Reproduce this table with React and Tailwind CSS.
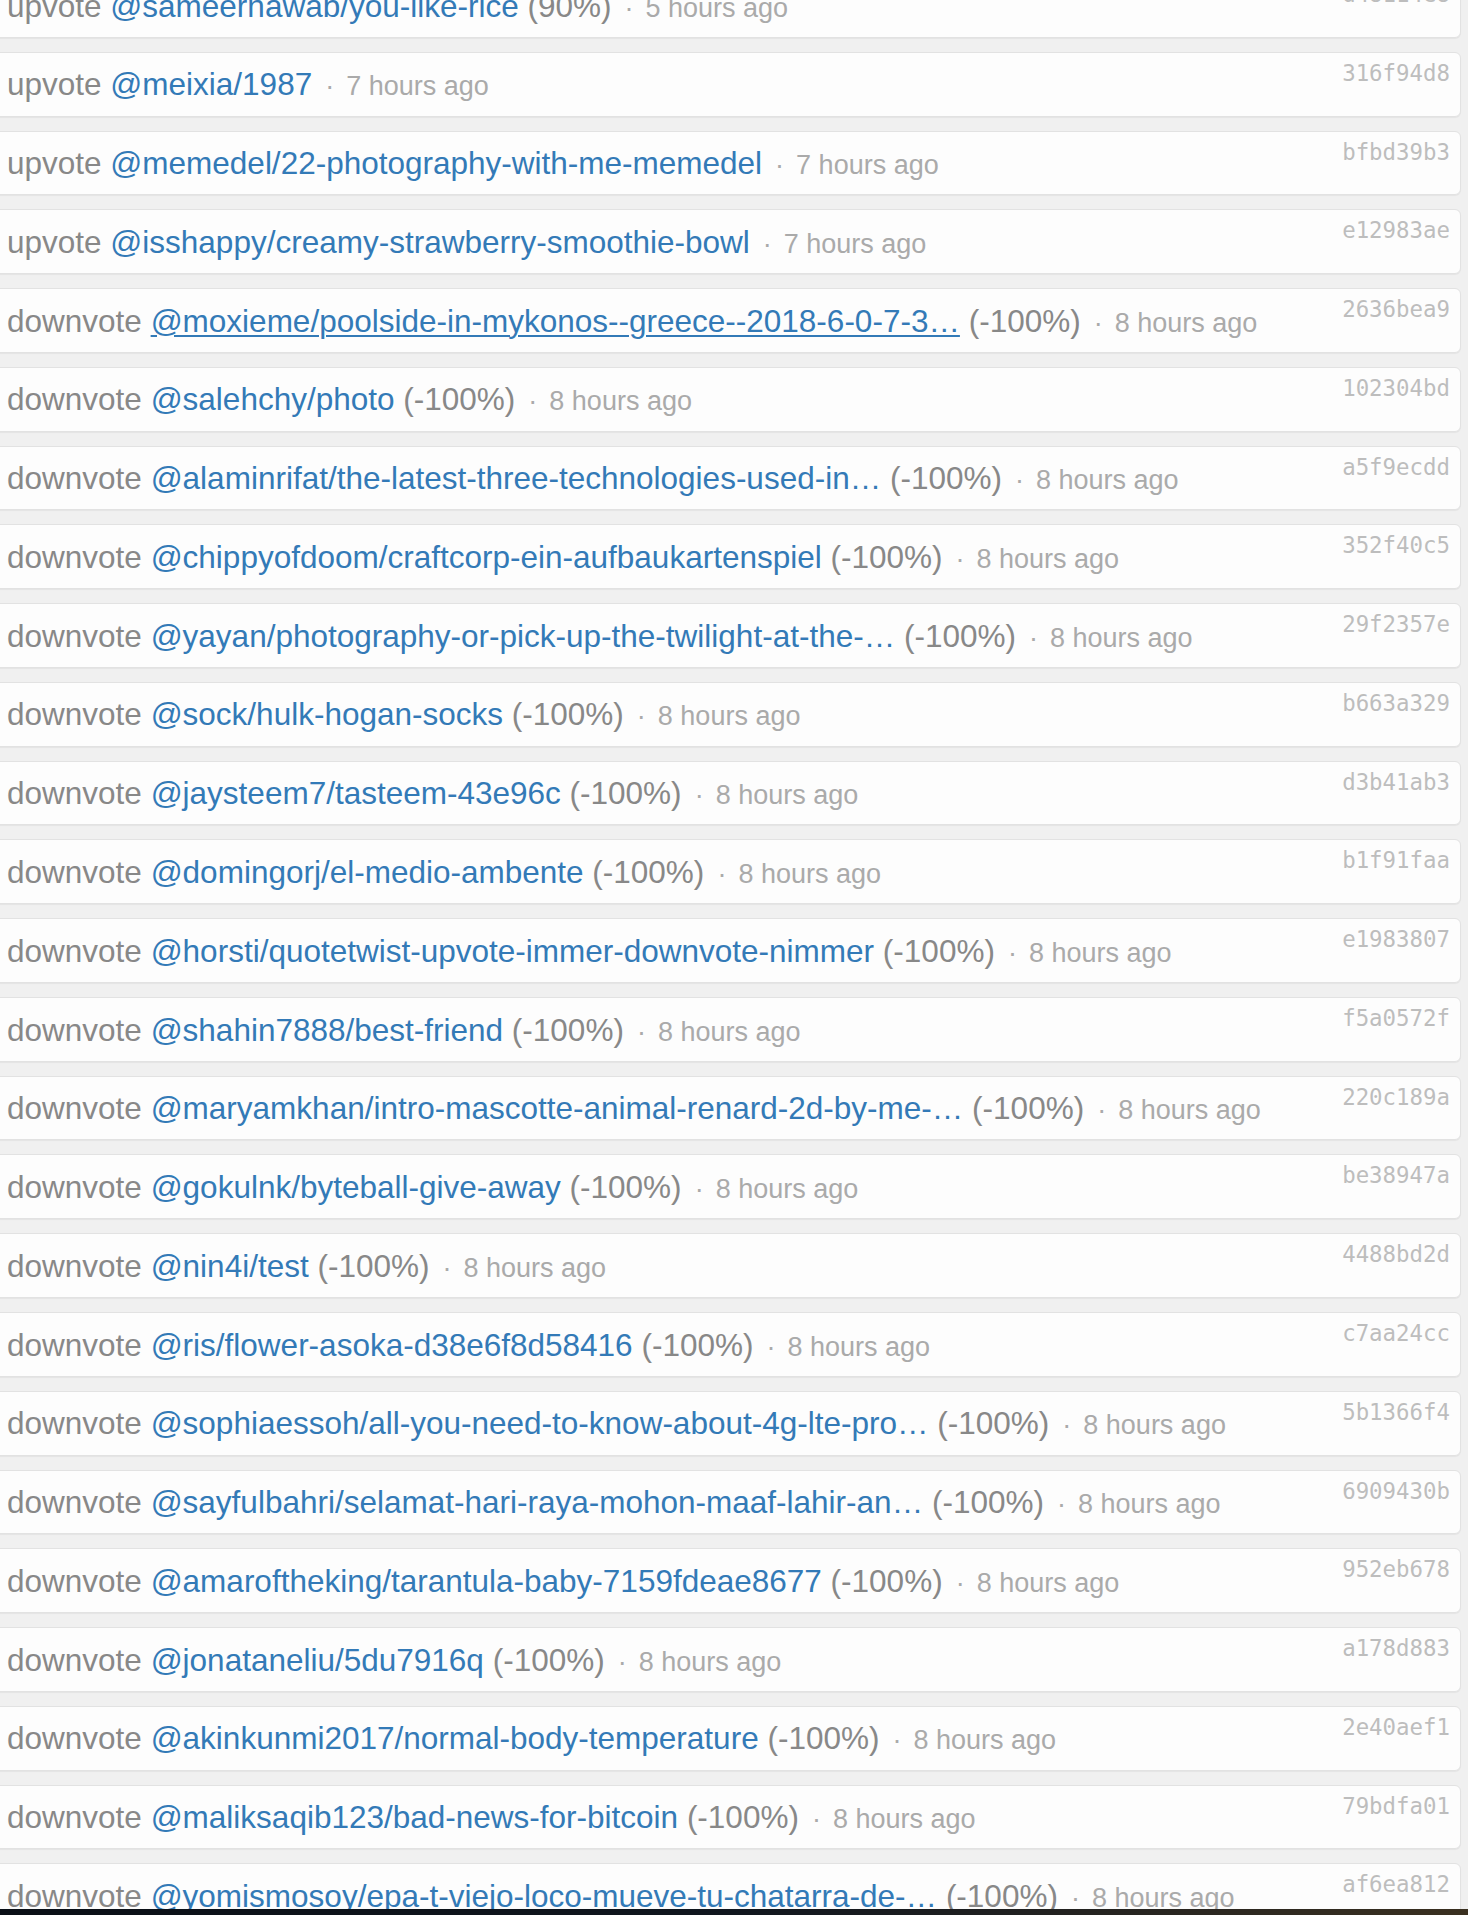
import React from "react";

const rows = [
  ["upvote", "@sameernawab/you-like-rice", "(90%)", "5 hours ago", "d48114e8"],
  ["upvote", "@meixia/1987", null, "7 hours ago", "316f94d8"],
  ["upvote", "@memedel/22-photography-with-me-memedel", null, "7 hours ago", "bfbd39b3"],
  ["upvote", "@isshappy/creamy-strawberry-smoothie-bowl", null, "7 hours ago", "e12983ae"],
  ["downvote", "@moxieme/poolside-in-mykonos--greece--2018-6-0-7-3\u2026", "(-100%)", "8 hours ago", "2636bea9", true],
  ["downvote", "@salehchy/photo", "(-100%)", "8 hours ago", "102304bd"],
  ["downvote", "@alaminrifat/the-latest-three-technologies-used-in\u2026", "(-100%)", "8 hours ago", "a5f9ecdd"],
  ["downvote", "@chippyofdoom/craftcorp-ein-aufbaukartenspiel", "(-100%)", "8 hours ago", "352f40c5"],
  ["downvote", "@yayan/photography-or-pick-up-the-twilight-at-the-\u2026", "(-100%)", "8 hours ago", "29f2357e"],
  ["downvote", "@sock/hulk-hogan-socks", "(-100%)", "8 hours ago", "b663a329"],
  ["downvote", "@jaysteem7/tasteem-43e96c", "(-100%)", "8 hours ago", "d3b41ab3"],
  ["downvote", "@domingorj/el-medio-ambente", "(-100%)", "8 hours ago", "b1f91faa"],
  ["downvote", "@horsti/quotetwist-upvote-immer-downvote-nimmer", "(-100%)", "8 hours ago", "e1983807"],
  ["downvote", "@shahin7888/best-friend", "(-100%)", "8 hours ago", "f5a0572f"],
  ["downvote", "@maryamkhan/intro-mascotte-animal-renard-2d-by-me-\u2026", "(-100%)", "8 hours ago", "220c189a"],
  ["downvote", "@gokulnk/byteball-give-away", "(-100%)", "8 hours ago", "be38947a"],
  ["downvote", "@nin4i/test", "(-100%)", "8 hours ago", "4488bd2d"],
  ["downvote", "@ris/flower-asoka-d38e6f8d58416", "(-100%)", "8 hours ago", "c7aa24cc"],
  ["downvote", "@sophiaessoh/all-you-need-to-know-about-4g-lte-pro\u2026", "(-100%)", "8 hours ago", "5b1366f4"],
  ["downvote", "@sayfulbahri/selamat-hari-raya-mohon-maaf-lahir-an\u2026", "(-100%)", "8 hours ago", "6909430b"],
  ["downvote", "@amaroftheking/tarantula-baby-7159fdeae8677", "(-100%)", "8 hours ago", "952eb678"],
  ["downvote", "@jonataneliu/5du7916q", "(-100%)", "8 hours ago", "a178d883"],
  ["downvote", "@akinkunmi2017/normal-body-temperature", "(-100%)", "8 hours ago", "2e40aef1"],
  ["downvote", "@maliksaqib123/bad-news-for-bitcoin", "(-100%)", "8 hours ago", "79bdfa01"],
  ["downvote", "@yomismosoy/epa-t-viejo-loco-mueve-tu-chatarra-de-\u2026", "(-100%)", "8 hours ago", "af6ea812"],
];

function Row({ kind, link, pct, time, hash, underline }) {
  return (
    <div className="-ml-[12px] mr-[7px] mb-[14px] h-[64.77px] shrink-0 rounded-[6px] border border-[#e2e2e2] bg-[#fdfdfd] shadow-[0_1px_1px_rgba(0,0,0,0.05)] pl-[18px] pr-[10px] flex items-start justify-between overflow-hidden">
      <div className="pt-[16.6px] text-[31.5px] leading-[31.5px] whitespace-nowrap text-[#888] font-['Liberation_Sans',Arial,sans-serif]">
        <span>{kind}</span>{" "}
        <a className={"text-[#337ab7]" + (underline ? " underline decoration-[2px] underline-offset-[3px]" : "")}>{link}</a>
        {pct ? <span>{" "}{pct}</span> : null}
        <span className="text-[27px] text-[#aaa]">
          <span className="ml-[13px]">·</span>
          <span className="ml-[12px]">{time}</span>
        </span>
      </div>
      <div className="pt-[9px] text-[22.4px] leading-[22.4px] text-[#bdbdbd] whitespace-nowrap font-['DejaVu_Sans_Mono',monospace]">
        {hash}
      </div>
    </div>
  );
}

export default function App() {
  return (
    <div className="h-[1915px] overflow-hidden bg-[#f0f0f0]">
      <div className="-mt-[27px] flex flex-col">
        {rows.map((r, i) => (
          <Row key={i} kind={r[0]} link={r[1]} pct={r[2]} time={r[3]} hash={r[4]} underline={r[5]} />
        ))}
      </div>
      <div className="fixed bottom-0 left-0 right-0 h-[6px] bg-gradient-to-r from-[#0a0f16] via-[#10161e] to-[#3a3020]" />
    </div>
  );
}
